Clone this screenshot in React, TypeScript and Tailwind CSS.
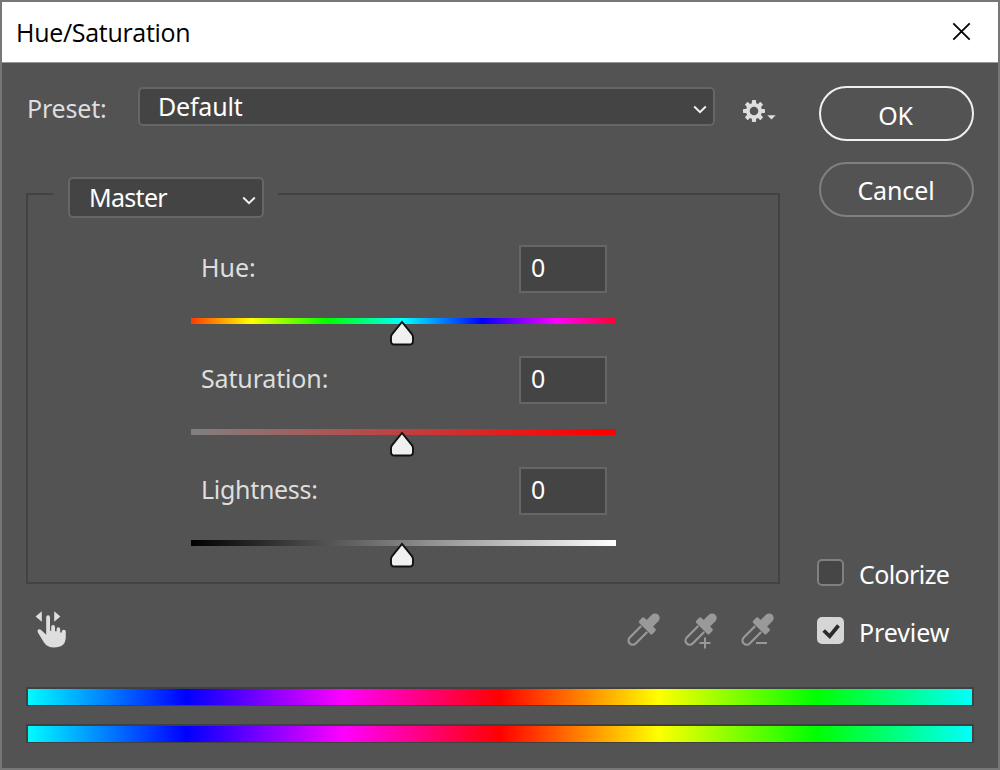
import React from "react";

const ui = "font-['Noto_Sans',sans-serif] text-[25px] leading-[36px] whitespace-nowrap";

function Chevron({ className }: { className: string }) {
  return (
    <svg className={className} width="14" height="9" viewBox="0 0 14 9" fill="none">
      <path d="M1.2 1.5 7 7.2 12.8 1.5" stroke="#f0f0f0" strokeWidth="2" />
    </svg>
  );
}

function Thumb() {
  return (
    <svg className="block" width="26" height="27" viewBox="0 0 26 27">
      <path
        d="M13 1.9 22.9 14.1Q24 15.5 24 17.3V21Q24 24.5 20.6 24.5H5.4Q2 24.5 2 21V17.3Q2 15.5 3.1 14.1Z"
        fill="#f0f0f0"
        stroke="#111"
        strokeWidth="1.9"
      />
    </svg>
  );
}

function Slider({ label, labelClass, track }: { label: string; labelClass: string; track: string }) {
  return (
    <div className="h-[111px] w-[425px]">
      <div className="flex h-[48px] items-start justify-between pl-[10px] pr-[9px]">
        <label className={`${ui} mt-[4px] text-[#dedede] ${labelClass}`}>{label}</label>
        <div className="flex h-[48px] w-[88px] items-start border-2 border-[#666] bg-[#444] pl-[10px]">
          <span className={`${ui} mt-[2px] text-white`}>0</span>
        </div>
      </div>
      <div className={`mt-[25px] h-[6px] w-full ${track}`} />
      <div className="mt-[-4px] ml-[198px] h-[27px]">
        <Thumb />
      </div>
    </div>
  );
}

function Dropper({ children }: { children?: React.ReactNode }) {
  return (
    <svg width="36" height="38" viewBox="0 0 36 38" fill="none">
      <g transform="translate(17.5 18.7) rotate(45)">
        <path d="M-4.2 -1V15.2a4.2 4.2 0 0 0 8.4 0V-1" stroke="#999" strokeWidth="2.2" />
        <path
          d="M-4.6 -16.4a4.6 4.6 0 0 1 9.2 0V-9H7.8Q9.4 -9 9.4 -7.4V-3.4Q9.4 -1.8 7.8 -1.8H-7.8Q-9.4 -1.8 -9.4 -3.4V-7.4Q-9.4 -9 -7.8 -9H-4.6Z"
          fill="#999"
        />
      </g>
      {children}
    </svg>
  );
}

export default function App() {
  const spectrum =
    "bg-[linear-gradient(to_right,#0ff_0%,#00f_16.9%,#f0f_33.5%,#f00_50%,#ff0_66.7%,#0f0_83.3%,#0ff_100%)]";
  return (
    <div className="flex h-[770px] w-[1000px] flex-col overflow-hidden border-2 border-[#777] bg-[#535353]">
      <header className="flex h-[61px] shrink-0 items-start justify-between border-b border-[#999] bg-white pl-[14px] pr-[27px]">
        <h1 className="mt-[12px] font-['Open_Sans',sans-serif] text-[25px] leading-[36px] tracking-[-0.3px] whitespace-nowrap text-black">
          Hue/Saturation
        </h1>
        <svg className="mt-[20px]" width="19" height="19" viewBox="0 0 19 19">
          <path d="M1.3 1.3 17.7 17.7M17.7 1.3 1.3 17.7" stroke="#000" strokeWidth="1.8" />
        </svg>
      </header>

      <div className="flex h-[622px] shrink-0 pl-[24px]">
        <div className="w-[754px]">
          <div className="mt-[24px] flex h-[40px] items-start">
            <span className={`${ui} mt-[3px] w-[112px] pl-[1px] tracking-[-0.2px] text-[#dedede]`}>Preset:</span>
            <div className="flex h-[39px] w-[577px] items-start justify-between rounded-[5px] border-2 border-[#666] bg-[#444] pl-[18px] pr-[6px]">
              <span className={`${ui} -mt-[1px] tracking-[-0.2px] text-white`}>Default</span>
              <Chevron className="mt-[16px]" />
            </div>
            <svg className="mt-[13px] ml-[28px]" width="34" height="24" viewBox="0 0 34 24">
              <g fill="#dedede" transform="translate(11 11)">
                <path
                  fillRule="evenodd"
                  d="M-8 0a8 8 0 1 0 16 0a8 8 0 1 0 -16 0ZM-4.3 0a4.3 4.3 0 1 0 8.6 0a4.3 4.3 0 1 0 -8.6 0Z"
                />
                {[0, 45, 90, 135, 180, 225, 270, 315].map((a) => (
                  <rect key={a} x="-2.1" y="-11" width="4.2" height="4.6" rx="0.8" transform={`rotate(${a})`} />
                ))}
              </g>
              <path d="M24.3 15.2H32.7L28.5 19.6Z" fill="#dedede" />
            </svg>
          </div>

          <div className="mt-[50px] flex h-[41px]">
            <div className="mt-[16px] h-[25px] w-[27px] border-t-2 border-l-2 border-[#424242]" />
            <div className="ml-[15px] flex h-[41px] w-[196px] items-start justify-between rounded-[5px] border-2 border-[#666] bg-[#444] pl-[19px] pr-[6px]">
              <span className={`${ui} tracking-[-0.7px] text-white`}>Master</span>
              <Chevron className="mt-[17px]" />
            </div>
            <div className="mt-[16px] ml-[14px] h-[25px] flex-1 border-t-2 border-r-2 border-[#424242]" />
          </div>
          <div className="h-[366px] border-x-2 border-b-2 border-[#424242] pt-[27px] pl-[163px]">
            <Slider
              label="Hue:"
              labelClass=""
              track="bg-[linear-gradient(to_right,#ff3a00_0%,#ff0_14.1%,#0f0_32%,#0ff_50%,#00f_68.5%,#f0f_86%,#ff0030_100%)]"
            />
            <Slider
              label="Saturation:"
              labelClass="tracking-[-0.15px]"
              track="bg-[linear-gradient(to_right,#808080,#c04040_50%,#f00_95%)]"
            />
            <Slider
              label="Lightness:"
              labelClass="tracking-[-0.3px]"
              track="bg-[linear-gradient(to_right,#000,#555_33%,#808080_50%,#fff)]"
            />
          </div>

          <div className="flex items-start">
            <svg className="mt-[25px] ml-[8px]" width="34" height="40" viewBox="0 0 34 40" fill="#dedede">
              <path d="M1.6 7.5 7.8 2.2V12.8ZM26.4 7.5 20.2 2.2V12.8Z" />
              <path d="M12.2 8.5Q12.2 6.3 14.1 6.3T16 8.5V21.8H17.2V18Q17.2 16.1 19.1 16.1T21 18V22.3H22.6V20Q22.6 18.2 24.4 18.2T26.2 20V23.6H27.8V22.4Q27.8 20.7 29.8 20.7T31.8 22.5V28Q31.6 38.5 20 38.5Q13.3 38.5 10 33.5L4 23.7Q2.9 21.4 4.2 20.6Q5.7 19.8 7.4 21.3L12.2 25.8Z" />
            </svg>
            <div className="mt-[27px] ml-[558px] flex gap-[21px]">
              <Dropper />
              <Dropper>
                <path d="M16.5 32H27.5M22 26.5V37.5" stroke="#999" strokeWidth="2" />
              </Dropper>
              <Dropper>
                <path d="M16 32H27" stroke="#999" strokeWidth="2" />
              </Dropper>
            </div>
          </div>
        </div>

        <div className="ml-[39px] w-[155px] shrink-0">
          <button className={`${ui} mt-[23px] block h-[55px] w-[155px] rounded-full border-2 border-[#f0f0f0] pt-[2px] pr-[2px] tracking-[-0.3px] text-white`}>
            OK
          </button>
          <button className={`${ui} mt-[21px] block h-[55px] w-[155px] rounded-full border-2 border-[#808080] pt-[1px] pr-[1px] tracking-[-0.1px] text-white`}>
            Cancel
          </button>
          <div className="mt-[342px] -ml-[2px] flex h-[58px] items-start">
            <div className="h-[27px] w-[27px] rounded-[5px] border-2 border-[#808080] bg-[#464646]" />
            <span className={`${ui} -mt-[3px] ml-[15px] tracking-[-0.6px] text-white`}>Colorize</span>
          </div>
          <div className="-ml-[2px] flex h-[36px] items-start">
            <div className="h-[27px] w-[27px] rounded-[5px] bg-[#d6d6d6]">
              <svg width="27" height="27" viewBox="0 0 27 27" fill="none">
                <path d="M6.7 13.5 12.7 19.3 21.5 8.5" stroke="#2b2b2b" strokeWidth="3.8" />
              </svg>
            </div>
            <span className={`${ui} -mt-[3px] ml-[15px] tracking-[-0.1px] text-white`}>Preview</span>
          </div>
        </div>
      </div>

      <div className="flex flex-col gap-[18px] pt-[2px] pl-[24px]">
        <div className={`h-[19px] w-[948px] border-2 border-b-1 border-[#404040] bg-origin-border ${spectrum}`} />
        <div className={`h-[19px] w-[948px] border-2 border-b-1 border-[#404040] bg-origin-border ${spectrum}`} />
      </div>
    </div>
  );
}
